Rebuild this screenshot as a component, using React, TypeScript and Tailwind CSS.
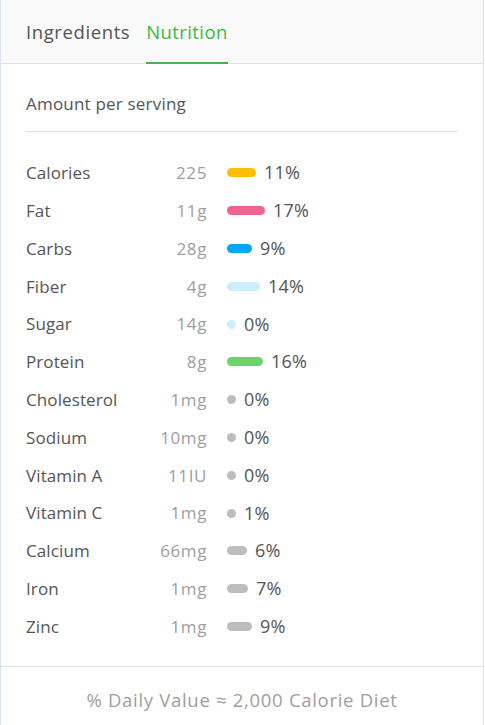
import type { FC } from 'react';

type Nutrient = {
  name: string;
  amount: string;
  pct: number;
  bar: number;
  color: string;
};

const nutrients: Nutrient[] = [
  { name: 'Calories', amount: '225', pct: 11, bar: 29, color: 'bg-[#ffbf00]' },
  { name: 'Fat', amount: '11g', pct: 17, bar: 38, color: 'bg-[#f06292]' },
  { name: 'Carbs', amount: '28g', pct: 9, bar: 25, color: 'bg-[#03a6f0]' },
  { name: 'Fiber', amount: '4g', pct: 14, bar: 33, color: 'bg-[#cdeefc]' },
  { name: 'Sugar', amount: '14g', pct: 0, bar: 9, color: 'bg-[#cdeefc]' },
  { name: 'Protein', amount: '8g', pct: 16, bar: 36, color: 'bg-[#6cd46c]' },
  { name: 'Cholesterol', amount: '1mg', pct: 0, bar: 9, color: 'bg-[#bdbdbd]' },
  { name: 'Sodium', amount: '10mg', pct: 0, bar: 9, color: 'bg-[#bdbdbd]' },
  { name: 'Vitamin A', amount: '11IU', pct: 0, bar: 9, color: 'bg-[#bdbdbd]' },
  { name: 'Vitamin C', amount: '1mg', pct: 1, bar: 9, color: 'bg-[#bdbdbd]' },
  { name: 'Calcium', amount: '66mg', pct: 6, bar: 20, color: 'bg-[#bdbdbd]' },
  { name: 'Iron', amount: '1mg', pct: 7, bar: 21, color: 'bg-[#bdbdbd]' },
  { name: 'Zinc', amount: '1mg', pct: 9, bar: 25, color: 'bg-[#bdbdbd]' },
];

const Row: FC<{ n: Nutrient }> = ({ n }) => (
  <div className="flex h-[37.8px] items-center text-[17px]">
    <span className="w-[130px] tracking-[0.1px] text-[#555]">{n.name}</span>
    <span className="w-[51px] text-right tracking-[0.6px] text-[#9e9e9e]">{n.amount}</span>
    <span
      className={`ml-[20px] h-[9px] rounded-full ${n.color}`}
      style={{ width: n.bar }}
    />
    <span className="ml-[8px] text-[18px] tracking-[0.2px] text-[#555]">{n.pct}%</span>
  </div>
);

export default function App() {
  return (
    <div className="w-[485px] h-[725px] bg-white font-['Open_Sans',sans-serif]">
      <div className="flex h-full w-[484px] flex-col border-x border-[#dde3ea]">
        <div className="flex h-[64px] items-end gap-[16px] border-b border-[#dde3ea] bg-[#f9f9f9] px-[25px]">
          <button className="h-full border-b-2 border-transparent pt-[2px] text-[18.5px] tracking-[0.6px] text-[#555]">
            Ingredients
          </button>
          <button className="-mb-px h-[calc(100%+1px)] border-b-2 border-[#4caf50] pt-[2px] text-[18.5px] tracking-[0.4px] text-[#3dba3d]">
            Nutrition
          </button>
        </div>
        <div className="flex-1 px-[25px]">
          <div className="flex h-[68px] items-end border-b border-[#dde3ea] pb-[15px] text-[17px] tracking-[0.2px] text-[#555]">
            Amount per serving
          </div>
          <div className="pt-[22px]">
            {nutrients.map((n) => (
              <Row key={n.name} n={n} />
            ))}
          </div>
        </div>
        <div className="flex h-[59px] items-center justify-center border-t border-[#dde3ea] pt-[7px] text-[18.5px] tracking-[0.7px] text-[#9e9e9e]">
          % Daily Value ≈ 2,000 Calorie Diet
        </div>
      </div>
    </div>
  );
}
